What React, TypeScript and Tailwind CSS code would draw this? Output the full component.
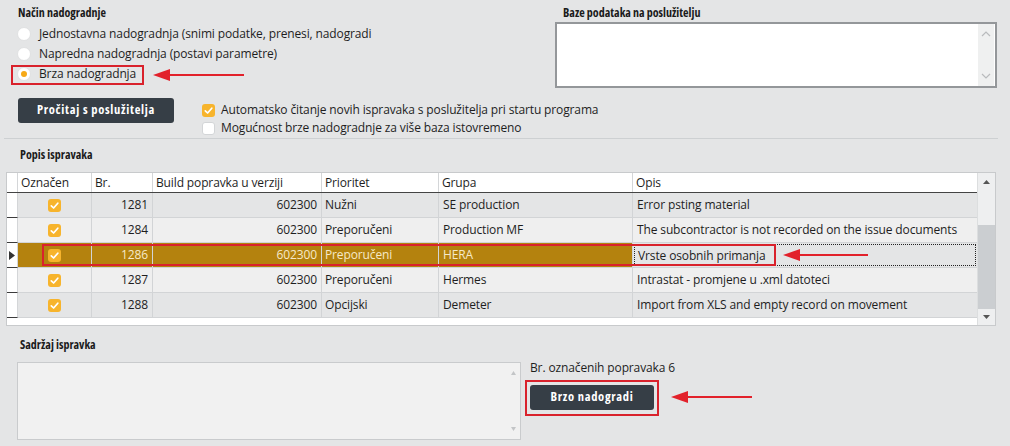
import React from "react";

type Row = {
  id: number;
  build: string;
  prioritet: string;
  grupa: string;
  opis: string;
  selected?: boolean;
};

const ROWS: Row[] = [
  { id: 1281, build: "602300", prioritet: "Nužni", grupa: "SE production", opis: "Error psting material" },
  { id: 1284, build: "602300", prioritet: "Preporučeni", grupa: "Production MF", opis: "The subcontractor is not recorded on the issue documents" },
  { id: 1286, build: "602300", prioritet: "Preporučeni", grupa: "HERA", opis: "Vrste osobnih primanja", selected: true },
  { id: 1287, build: "602300", prioritet: "Preporučeni", grupa: "Hermes", opis: "Intrastat - promjene u .xml datoteci" },
  { id: 1288, build: "602300", prioritet: "Opcijski", grupa: "Demeter", opis: "Import from XLS and empty record on movement" },
];

const condensed = "font-['Open_Sans',sans-serif] [font-stretch:78%]";
const titleCls = `${condensed} font-bold text-[12px] leading-[16px] tracking-normal text-[#1b1b1b]`;

function CheckBox({ checked }: { checked: boolean }) {
  if (!checked) {
    return <span className="block shrink-0 w-[13px] h-[13px] rounded-[3px] bg-white border border-[#d3d5d7]" />;
  }
  return (
    <span className="flex shrink-0 w-[13px] h-[13px] rounded-[3px] bg-[#f7b42c] items-center justify-center">
      <svg width="13" height="13" viewBox="0 0 13 13" fill="none">
        <path d="M3.3 6.8 L5.6 9 L9.8 4.2" stroke="white" strokeWidth="1.7" strokeLinecap="round" strokeLinejoin="round" />
      </svg>
    </span>
  );
}

function Radio({ checked }: { checked: boolean }) {
  return (
    <span className="flex shrink-0 w-[14px] h-[14px] rounded-full bg-white border border-[#e0e1e2] items-center justify-center">
      {checked && <span className="block w-[6px] h-[6px] rounded-full bg-[#f6a917]" />}
    </span>
  );
}

function Arrow({ width }: { width: number }) {
  return (
    <svg width={width} height="14" viewBox={`0 0 ${width} 14`} fill="none">
      <line x1="14" y1="7" x2={width} y2="7" stroke="#e2212b" strokeWidth="2" />
      <path d="M0 7 L17 1 L17 13 Z" fill="#e2212b" />
    </svg>
  );
}

function Chevron({ up }: { up: boolean }) {
  return (
    <svg width="10" height="6" viewBox="0 0 10 6" fill="none">
      <path d={up ? "M1 5 L5 1 L9 5" : "M1 1 L5 5 L9 1"} stroke="#b9bbbd" strokeWidth="1.2" />
    </svg>
  );
}

export default function App() {
  return (
    <div className="relative w-[1010px] h-[446px] overflow-hidden bg-[#e4e5e6] text-[12px] tracking-[-0.13px] text-[#1e1e1e] font-['Open_Sans',sans-serif]">
      {/* Top section */}
      <div className="flex h-[138px]">
        <div className="w-[555px] pl-[18px] pt-[5px]">
          <div className={titleCls}>Način nadogradnje</div>
          <div className="mt-[3px] -ml-[1px]">
            {[
              "Jednostavna nadogradnja (snimi podatke, prenesi, nadogradi",
              "Napredna nadogradnja (postavi parametre)",
              "Brza nadogradnja",
            ].map((label, i) => (
              <div key={label} className="flex items-center h-[20px] gap-[8px]">
                <Radio checked={i === 2} />
                <span className="leading-[16px] whitespace-nowrap">{label}</span>
              </div>
            ))}
          </div>
          <div className="flex mt-[14px]">
            <button className={`shrink-0 w-[156px] h-[25px] rounded-[3px] bg-[#363e46] text-white text-[12.5px] font-bold tracking-[0.7px] ${condensed}`}>
              Pročitaj s poslužitelja
            </button>
            <div className="ml-[28px] mt-[3px] whitespace-nowrap">
              <div className="flex items-center h-[18px] gap-[6px]">
                <CheckBox checked />
                <span>Automatsko čitanje novih ispravaka s poslužitelja pri startu programa</span>
              </div>
              <div className="flex items-center h-[18px] gap-[6px]">
                <CheckBox checked={false} />
                <span>Mogućnost brze nadogradnje za više baza istovremeno</span>
              </div>
            </div>
          </div>
        </div>
        <div className="w-[442px] pt-[5px]">
          <div className={`${titleCls} pl-[8px]`}>Baze podataka na poslužitelju</div>
          <div className="mt-px h-[66px] bg-white border-2 border-[#94979a] flex justify-end">
            <div className="w-[16px] h-full bg-[#eff0f0] flex flex-col items-center justify-between py-[7px] mr-[1px]">
              <Chevron up />
              <Chevron up={false} />
            </div>
          </div>
        </div>
      </div>
      <div className="ml-[4px] w-[994px] h-px bg-[#cdd0d2]" />

      {/* Table section */}
      <div className={`${titleCls} pl-[20px] mt-[8px]`}>Popis ispravaka</div>
      <div className="mt-[9px] ml-[6px] w-[990px] border border-[#c8cacc] flex bg-white">
        <div className="w-[970px]">
          <div className="grid grid-cols-[11px_74px_61px_169px_117px_194px_344px] h-[20px] bg-white border-b border-[#444]">
            <div className="border-r border-[#d4d6d8]" />
            {["Označen", "Br.", "Build popravka u verziji", "Prioritet", "Grupa", "Opis"].map((h, i) => (
              <div key={h} className={`pl-[3px] leading-[19px] ${i < 5 ? "border-r border-[#d4d6d8]" : ""}`}>
                {h}
              </div>
            ))}
          </div>
          {ROWS.map((r, idx) => {
            const rowBg = r.selected ? "bg-[#b4820e] text-[#f6e9c8]" : idx % 2 === 0 ? "bg-[#e4e5e6]" : "bg-[#efefef]";
            const cell = `h-[25px] border-r border-b border-[#d2d4d6] leading-[24px] ${rowBg}`;
            return (
              <div key={r.id} className="grid grid-cols-[11px_74px_61px_169px_117px_194px_344px]">
                <div className="h-[25px] bg-white border-r border-r-[#d4d6d8] border-b border-b-[#3c3c3c] flex items-center justify-center">
                  {r.selected && (
                    <svg width="6" height="9" viewBox="0 0 6 9">
                      <path d="M0 0 L6 4.5 L0 9 Z" fill="#333" />
                    </svg>
                  )}
                </div>
                <div className={`${cell} flex items-center justify-center`}>
                  <CheckBox checked />
                </div>
                <div className={`${cell} text-right pr-[4px]`}>{r.id}</div>
                <div className={`${cell} text-right pr-[4px]`}>{r.build}</div>
                <div className={`${cell} pl-[3px]`}>{r.prioritet}</div>
                <div className={`${cell} pl-[4px]`}>{r.grupa}</div>
                {r.selected ? (
                  <div className="h-[25px] border-b border-[#d2d4d6] bg-[#e4e5e6] p-px">
                    <div className="h-full border border-dotted border-[#222] pl-[3px] leading-[21px]">{r.opis}</div>
                  </div>
                ) : (
                  <div className={`${cell} border-r-0 pl-[4px]`}>{r.opis}</div>
                )}
              </div>
            );
          })}
          <div className="h-[7px] bg-white" />
        </div>
        <div className="w-[18px] flex flex-col bg-[#eeeff0] border-l border-[#dcdedf]">
          <div className="h-[52px] flex justify-center pt-[7px]">
            <svg width="7" height="4" viewBox="0 0 7 4">
              <path d="M0 4 L3.5 0 L7 4 Z" fill="#555" />
            </svg>
          </div>
          <div className="h-[84px] bg-[#cbced1]" />
          <div className="flex-1 flex justify-center pt-[6px]">
            <svg width="7" height="4" viewBox="0 0 7 4">
              <path d="M0 0 L3.5 4 L7 0 Z" fill="#555" />
            </svg>
          </div>
        </div>
      </div>

      {/* Bottom section */}
      <div className={`${titleCls} pl-[20px] mt-[11px]`}>Sadržaj ispravka</div>
      <div className="flex mt-[9px]">
        <div className="ml-[17px] w-[504px] h-[78px] bg-[#f1f1f1] border border-[#c9cbcd] flex justify-end">
          <div className="w-[14px] flex flex-col items-center justify-between py-[8px]">
            <svg width="5" height="4" viewBox="0 0 5 4">
              <path d="M0 4 L2.5 0 L5 4 Z" fill="#c3c5c7" />
            </svg>
            <svg width="5" height="4" viewBox="0 0 5 4">
              <path d="M0 0 L2.5 4 L5 0 Z" fill="#c3c5c7" />
            </svg>
          </div>
        </div>
        <div className="ml-[9px]">
          <div className="leading-[16px] -mt-[2px]">Br. označenih popravaka 6</div>
          <button className={`mt-[9px] w-[124px] h-[25px] rounded-[3px] bg-[#363e46] text-white text-[12.5px] font-bold tracking-[0.7px] ${condensed}`}>
            Brzo nadogradi
          </button>
        </div>
      </div>

      {/* Annotations */}
      <div className="absolute left-[11px] top-[65px] w-[133px] h-[20px] border-2 border-[#d9222c]" />
      <div className="absolute left-[153px] top-[68px]">
        <Arrow width={91} />
      </div>
      <div className="absolute left-[42px] top-[244px] w-[734px] h-[22px] border-2 border-[#d9222c]" />
      <div className="absolute left-[783px] top-[248px]">
        <Arrow width={85} />
      </div>
      <div className="absolute left-[525px] top-[380px] w-[134px] h-[36px] border-2 border-[#d9222c]" />
      <div className="absolute left-[671px] top-[390px]">
        <Arrow width={81} />
      </div>
    </div>
  );
}
